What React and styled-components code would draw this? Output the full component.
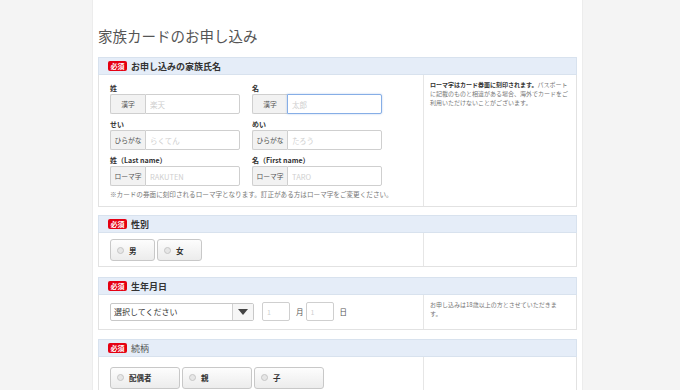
import React from "react";
import styled, { createGlobalStyle } from "styled-components";

const GlobalStyle = createGlobalStyle`
  body {
    margin: 0;
    background: #f4f4f4;
    font-family: "Noto Sans CJK JP", "Noto Sans", sans-serif;
    color: #333;
  }
`;

const Page = styled.div`
  width: 491px;
  min-height: 390px;
  margin-left: 92px;
  box-sizing: border-box;
  padding: 26px 5px 0;
  background: #fff;
  border-left: 1px solid #ececec;
  border-right: 1px solid #ececec;
`;

const Title = styled.h1`
  margin: 0 0 11px;
  font-size: 14.5px;
  line-height: 20px;
  font-weight: 400;
  color: #555;
`;

const Section = styled.section`
  margin-bottom: ${(p) => p.$gap || 0}px;
`;

const Header = styled.div`
  height: 18px;
  box-sizing: border-box;
  display: flex;
  align-items: center;
  gap: 4px;
  padding-left: 9px;
  background: #e5edf8;
  border: 1px solid #d8e2ee;
`;

const Badge = styled.span`
  display: inline-block;
  width: 19px;
  height: 10px;
  line-height: 10px;
  text-align: center;
  background: #e50012;
  color: #fff;
  font-size: 7px;
  font-weight: 700;
  border-radius: 2px;
`;

const HeaderText = styled.span`
  font-size: 9px;
  font-weight: ${(p) => (p.$light ? 400 : 700)};
  color: ${(p) => (p.$light ? "#555" : "#333")};
`;

const Body = styled.div`
  display: grid;
  grid-template-columns: 325px 1fr;
  border: 1px solid #e2e2e2;
  border-top: none;
  min-height: ${(p) => p.$min || 0}px;
`;

const Main = styled.div`
  border-right: 1px solid #e6e6e6;
  padding: ${(p) => p.$pad || "8px 0 7px 11px"};
  display: ${(p) => (p.$inline ? "flex" : "block")};
  align-items: center;
  gap: ${(p) => (p.$inline ? 2 : 0)}px;
`;

const Side = styled.div`
  padding: 5px 8px 5px 6px;
  font-size: 6px;
  line-height: 9px;
  color: #777;

  b {
    color: #333;
  }
`;

const Rows = styled.div`
  display: grid;
  row-gap: 5px;
`;

const Row = styled.div`
  display: flex;
  gap: 12px;
`;

const Field = styled.div`
  width: 130px;
  display: flex;
  flex-direction: column;
`;

const Label = styled.div`
  font-size: 7px;
  line-height: 10px;
  font-weight: 700;
  margin-bottom: 1px;
  color: #333;
`;

const InputGroup = styled.div`
  display: flex;
  height: 20px;
`;

const Addon = styled.span`
  width: 35px;
  box-sizing: border-box;
  display: flex;
  align-items: center;
  justify-content: center;
  background: #f2f2f2;
  border: 1px solid #cfcfcf;
  border-right: none;
  border-radius: 2px 0 0 2px;
  font-size: 6.8px;
  color: #555;
`;

const TextInput = styled.input`
  flex: 1;
  min-width: 0;
  box-sizing: border-box;
  height: 100%;
  margin: 0;
  padding: 0 4px;
  border: 1px solid ${(p) => (p.$focus ? "#86aee6" : "#cfcfcf")};
  box-shadow: ${(p) => (p.$focus ? "0 0 2px rgba(100,150,220,0.5)" : "none")};
  border-radius: 0 2px 2px 0;
  font-family: inherit;
  font-size: 7.5px;
  outline: none;

  &::placeholder {
    color: #cfcfcf;
  }
`;

const Note = styled.div`
  margin-top: 3px;
  font-size: 6.6px;
  line-height: 10px;
  color: #777;
`;

const RadioButton = styled.div`
  width: ${(p) => p.$w}px;
  height: 22px;
  box-sizing: border-box;
  display: flex;
  align-items: center;
  gap: 5px;
  padding-left: 6px;
  border: 1px solid #c8c8c8;
  border-radius: 3px;
  background: linear-gradient(#fdfdfd, #ececec);
  font-size: 7.5px;
  font-weight: 700;
  color: #333;
`;

const Circle = styled.span`
  width: 7px;
  height: 7px;
  box-sizing: border-box;
  border-radius: 50%;
  border: 1px solid #c6c6c6;
  background: #e6e6e6;
`;

const Select = styled.div`
  width: 144px;
  height: 18px;
  box-sizing: border-box;
  display: flex;
  border: 1px solid #c8c8c8;
  border-radius: 2px;
  background: #fff;
`;

const SelectText = styled.span`
  flex: 1;
  display: flex;
  align-items: center;
  padding-left: 3px;
  font-size: 8px;
  color: #333;
`;

const Arrow = styled.span`
  width: 20px;
  display: flex;
  align-items: center;
  justify-content: center;
  border-left: 1px solid #d0d0d0;
  background: #f6f6f6;

  &::after {
    content: "";
    border-left: 5px solid transparent;
    border-right: 5px solid transparent;
    border-top: 6px solid #444;
  }
`;

const SmallInput = styled.input`
  width: 28px;
  height: 19px;
  box-sizing: border-box;
  margin: 0 0 0 ${(p) => p.$ml || 0}px;
  padding: 0 4px;
  border: 1px solid #cfcfcf;
  border-radius: 2px;
  font-family: inherit;
  font-size: 7px;

  &::placeholder {
    color: #cfcfcf;
  }
`;

const Unit = styled.span`
  font-size: 7.5px;
  color: #555;
  margin-left: 4px;
`;

const nameRows = [
  [
    { label: "姓", addon: "漢字", ph: "楽天" },
    { label: "名", addon: "漢字", ph: "太郎", focus: true },
  ],
  [
    { label: "せい", addon: "ひらがな", ph: "らくてん" },
    { label: "めい", addon: "ひらがな", ph: "たろう" },
  ],
  [
    { label: "姓（Last name）", addon: "ローマ字", ph: "RAKUTEN" },
    { label: "名（First name）", addon: "ローマ字", ph: "TARO" },
  ],
];

const SectionHead = ({ children, light }) => (
  <Header>
    <Badge>必須</Badge>
    <HeaderText $light={light}>{children}</HeaderText>
  </Header>
);

const App = () => (
  <>
    <GlobalStyle />
    <Page>
      <Title>家族カードのお申し込み</Title>

      <Section $gap={8}>
        <SectionHead>お申し込みの家族氏名</SectionHead>
        <Body>
          <Main>
            <Rows>
              {nameRows.map((row, i) => (
                <Row key={i}>
                  {row.map((f) => (
                    <Field key={f.label}>
                      <Label>{f.label}</Label>
                      <InputGroup>
                        <Addon>{f.addon}</Addon>
                        <TextInput placeholder={f.ph} $focus={f.focus} />
                      </InputGroup>
                    </Field>
                  ))}
                </Row>
              ))}
            </Rows>
            <Note>
              ※カードの券面に刻印されるローマ字となります。訂正がある方はローマ字をご変更ください。
            </Note>
          </Main>
          <Side>
            <b>ローマ字はカード券面に刻印されます。</b>
            パスポートに記載のものと相違がある場合、海外でカードをご利用いただけないことがございます。
          </Side>
        </Body>
      </Section>

      <Section $gap={10}>
        <SectionHead>性別</SectionHead>
        <Body>
          <Main $inline $pad="6px 0 5px 11px">
            {["男", "女"].map((t) => (
              <RadioButton key={t} $w={45}>
                <Circle />
                {t}
              </RadioButton>
            ))}
          </Main>
          <Side />
        </Body>
      </Section>

      <Section $gap={9}>
        <SectionHead>生年月日</SectionHead>
        <Body>
          <Main $inline $pad="7px 0 8px 11px">
            <Select>
              <SelectText>選択してください</SelectText>
              <Arrow />
            </Select>
            <SmallInput placeholder="1" $ml={6} />
            <Unit>月</Unit>
            <SmallInput placeholder="1" />
            <Unit>日</Unit>
          </Main>
          <Side>お申し込みは18歳以上の方とさせていただきます。</Side>
        </Body>
      </Section>

      <Section>
        <SectionHead light>続柄</SectionHead>
        <Body $min={40}>
          <Main $inline $pad="6px 0 5px 11px">
            {["配偶者", "親", "子"].map((t) => (
              <RadioButton key={t} $w={70}>
                <Circle />
                {t}
              </RadioButton>
            ))}
          </Main>
          <Side />
        </Body>
      </Section>
    </Page>
  </>
);

export default App;
